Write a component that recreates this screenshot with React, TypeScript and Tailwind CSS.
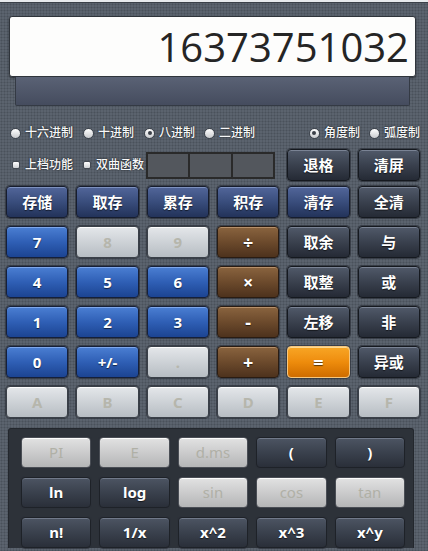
import React from "react";

type V = "blue" | "navy" | "dark" | "light" | "brown" | "orange" | "pdark" | "plight";

const variants: Record<V, string> = {
  blue: "bg-linear-to-b from-[#4b7fd3] via-[#2f5fb5] to-[#1c4492] border-[#15203a] text-white shadow-[inset_0_1px_0_rgba(170,200,255,0.55)]",
  navy: "bg-linear-to-b from-[#52669a] via-[#394d7c] to-[#23335a] border-[#161d2e] text-white shadow-[inset_0_1px_0_rgba(170,190,230,0.5)]",
  dark: "bg-linear-to-b from-[#515a6a] via-[#3a414e] to-[#252a35] border-[#15191f] text-white shadow-[inset_0_1px_0_rgba(200,210,230,0.35)]",
  light: "bg-linear-to-b from-[#e4e7ea] to-[#b7bdc3] border-[#3a4048] text-[#b6b6ac] shadow-[inset_0_1px_0_rgba(255,255,255,0.9)]",
  brown: "bg-linear-to-b from-[#8a643f] via-[#6c4a2c] to-[#4d321d] border-[#2a1c12] text-white shadow-[inset_0_1px_0_rgba(230,190,150,0.5)]",
  orange: "bg-linear-to-b from-[#f8a624] via-[#ee8c0c] to-[#cf6c00] border-[#f7c77e] text-white shadow-[inset_0_1px_0_rgba(255,230,170,0.8)]",
  pdark: "bg-linear-to-b from-[#4d5563] via-[#3a414d] to-[#2a2f39] border-[#1e2228] text-white shadow-[inset_0_1px_0_rgba(200,210,230,0.3)]",
  plight: "bg-linear-to-b from-[#e2e2e2] to-[#b5b6b7] border-[#4a4e55] text-[#b0b0a6] shadow-[inset_0_1px_0_rgba(255,255,255,0.9)]",
};

function Btn({ v, children, h = "h-[32px]", big }: { v: V; children: React.ReactNode; h?: string; big?: boolean }) {
  const weight = v === "plight" ? "font-normal" : "font-bold";
  const shadow = v === "light" || v === "plight" ? "" : "[text-shadow:0_1px_1px_rgba(0,0,0,0.6)]";
  const size = big ? "text-[18px]" : "text-[15px]";
  return (
    <div
      className={`flex items-center justify-center rounded-[4px] border leading-none ${size} ${h} ${weight} ${shadow} ${variants[v]} ring-1 ring-[#2c3139]/70`}
    >
      {children}
    </div>
  );
}

function Radio({ label, on }: { label: string; on?: boolean }) {
  return (
    <div className="flex items-center">
      <span className="flex h-[11px] w-[11px] items-center justify-center rounded-full border border-[#3d434c] bg-linear-to-b from-white to-[#c9cbce]">
        {on && <span className="h-[4px] w-[4px] rounded-full bg-[#3a3f47]" />}
      </span>
      <span className="ml-[4px] text-[12px] font-medium leading-none text-[#f7f8f9] [text-shadow:0_0_2px_rgba(0,0,0,0.95)]">
        {label}
      </span>
    </div>
  );
}

function Check({ label }: { label: string }) {
  return (
    <div className="flex items-center">
      <span className="h-[8px] w-[8px] rounded-[2px] border border-[#444a52] bg-linear-to-b from-white to-[#cfd1d4]" />
      <span className="ml-[5px] text-[12px] font-medium leading-none text-[#f7f8f9] [text-shadow:0_0_2px_rgba(0,0,0,0.95)]">
        {label}
      </span>
    </div>
  );
}

export default function App() {
  const rows: [V, string][][] = [
    [
      ["blue", "7"], ["light", "8"], ["light", "9"], ["brown", "÷"], ["dark", "取余"], ["dark", "与"],
    ],
    [
      ["blue", "4"], ["blue", "5"], ["blue", "6"], ["brown", "×"], ["dark", "取整"], ["dark", "或"],
    ],
    [
      ["blue", "1"], ["blue", "2"], ["blue", "3"], ["brown", "-"], ["dark", "左移"], ["dark", "非"],
    ],
    [
      ["blue", "0"], ["blue", "+/-"], ["light", "."], ["brown", "+"], ["orange", "="], ["dark", "异或"],
    ],
    [
      ["light", "A"], ["light", "B"], ["light", "C"], ["light", "D"], ["light", "E"], ["light", "F"],
    ],
  ];
  const prow: [V, string][][] = [
    [["plight", "PI"], ["plight", "E"], ["plight", "d.ms"], ["pdark", "("], ["pdark", ")"]],
    [["pdark", "ln"], ["pdark", "log"], ["plight", "sin"], ["plight", "cos"], ["plight", "tan"]],
    [["pdark", "n!"], ["pdark", "1/x"], ["pdark", "x^2"], ["pdark", "x^3"], ["pdark", "x^y"]],
  ];
  const bigSyms = ["÷", "×", "+", "=", "-"];

  return (
    <div className="h-[551px] w-[428px] overflow-hidden bg-[#5b636e] bg-[radial-gradient(circle,#4a515b_0.9px,transparent_1.1px)] bg-[length:3px_3px] font-['Noto_Sans','Noto_Sans_CJK_SC',sans-serif]">
      <div className="h-[3px] border-b border-[#3b4149] bg-[#e7eaed]" />
      {/* display */}
      <div className="pl-[9px] pr-[12px] pt-[13px]">
        <div className="flex h-[61px] items-center justify-end rounded-[3px] border border-[#2f343b] bg-[#fdfdfc] pr-[6px] font-['Open_Sans',sans-serif] text-[40px] leading-none text-[#252525] shadow-[0_1px_2px_rgba(0,0,0,0.5)]">
          16373751032
        </div>
        <div className="mx-[6px] h-[29px] rounded-b-[2px] border border-t-0 border-[#343a44] bg-linear-to-b from-[#5a6275] to-[#454c5e]" />
      </div>

      {/* radio row */}
      <div className="mt-[20px] flex h-[14px] items-center pl-[10px] pr-[8px]">
        <Radio label="十六进制" />
        <div className="ml-[10px]"><Radio label="十进制" /></div>
        <div className="ml-[10px]"><Radio label="八进制" on /></div>
        <div className="ml-[9px]"><Radio label="二进制" /></div>
        <div className="ml-auto"><Radio label="角度制" on /></div>
        <div className="ml-[9px]"><Radio label="弧度制" /></div>
      </div>

      {/* checkbox row */}
      <div className="mt-[9px] grid grid-cols-6 gap-x-[8px] pl-[6px] pr-[8px]">
        <div className="col-span-4 flex items-center pl-[6px]">
          <Check label="上档功能" />
          <div className="ml-[10px]"><Check label="双曲函数" /></div>
          <div className="ml-[2px] flex h-[27px] w-[129px] gap-[2px] border-2 border-[#2a2a2a] bg-[#2a2a2a]">
            <div className="flex-1 bg-[#53575d]" />
            <div className="flex-1 bg-[#53575d]" />
            <div className="flex-1 bg-[#53575d]" />
          </div>
        </div>
        <Btn v="dark">退格</Btn>
        <Btn v="dark">清屏</Btn>
      </div>

      {/* main grid */}
      <div className="mt-[5px] grid grid-cols-6 gap-x-[8px] gap-y-[8px] pl-[6px] pr-[8px]">
        <Btn v="navy">存储</Btn>
        <Btn v="navy">取存</Btn>
        <Btn v="navy">累存</Btn>
        <Btn v="navy">积存</Btn>
        <Btn v="navy">清存</Btn>
        <Btn v="dark">全清</Btn>
        {rows.flat().map(([v, t], i) => (
          <Btn key={i} v={v} big={bigSyms.includes(t)}>{t}</Btn>
        ))}
      </div>

      {/* bottom panel */}
      <div className="ml-[8px] mr-[14px] mt-[10px] rounded-t-[3px] border border-b-0 border-[#23272d] bg-[#2d3239] pl-[12px] pr-[8px] pt-[8px]">
        <div className="grid grid-cols-5 gap-x-[8px] gap-y-[9px]">
          {prow.flat().map(([v, t], i) => (
            <Btn key={i} v={v} h="h-[31px]">{t}</Btn>
          ))}
        </div>
      </div>
    </div>
  );
}
